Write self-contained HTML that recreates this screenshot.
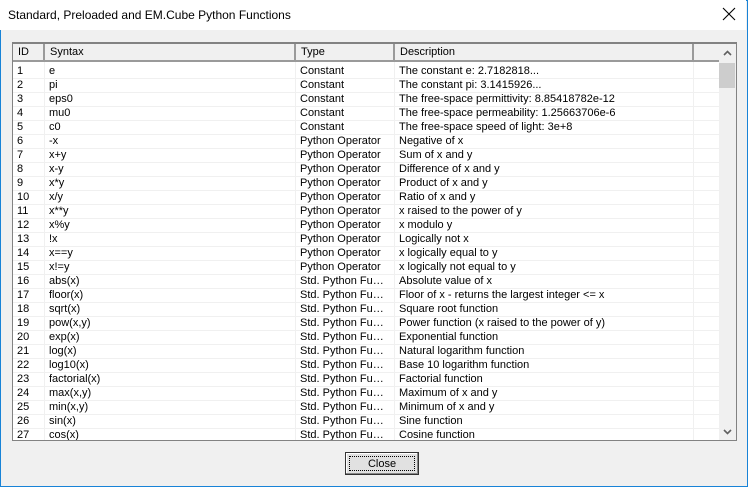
<!DOCTYPE html>
<html><head><style>
*{margin:0;padding:0;box-sizing:border-box}
body{width:748px;height:487px;background:#f0f0f0;font-family:"Liberation Sans",Tahoma,sans-serif;font-size:11px;color:#000;position:relative;overflow:hidden}
.win{position:absolute;left:0;top:0;width:748px;height:487px;border:1px solid #1883d7}
.title{position:absolute;left:0;top:0;width:746px;height:30px;background:#fff;font-size:12px;line-height:31px;padding-left:8px}
.x{position:absolute;right:10px;top:7px;width:14px;height:14px}
.list{position:absolute;left:12px;top:42px;width:725px;height:399px;border:1px solid #828282;border-top:2px solid #828282;background:#fff;overflow:hidden}
.hdr{position:absolute;left:0;top:0;height:18px;width:706px;background:#f0f0f0;border-bottom:2px solid #9a9a9a}
.hdr div{position:absolute;top:0;height:16px;line-height:17px;padding-left:5px;border-right:2px solid #9a9a9a}
.rows{position:absolute;left:0;top:21px;width:706px}
.r{position:relative;height:14px;border-bottom:1px solid #f0f0f0;line-height:13px;white-space:nowrap}
.r span{position:absolute;top:0;padding-left:4px}
.vl{position:absolute;top:18px;bottom:0;width:1px;background:#f0f0f0}
.sb{position:absolute;left:706px;top:0;width:17px;height:397px;background:#f0f0f0}
.thumb{position:absolute;left:0;top:19px;width:16px;height:25px;background:#cdcdcd}
.btn{position:absolute;left:345px;top:452px;width:74px;height:23px;border:1px solid #333;background:#e1e1e1;box-shadow:inset -1px -1px #888,inset 1px 1px #fff;text-align:center;line-height:19px}
.btn i{position:absolute;left:3px;top:3px;right:3px;bottom:3px;border:1px dotted #000;font-style:normal;line-height:14px}
</style></head><body>
<div class="win"></div>
<div class="title">Standard, Preloaded and EM.Cube Python Functions
<svg class="x" viewBox="0 0 14 14"><path d="M1 1L13 13M13 1L1 13" stroke="#000" stroke-width="1.1"/></svg></div>
<div class="list">
<div class="hdr">
<div style="left:0;width:32px">ID</div>
<div style="left:32px;width:251px">Syntax</div>
<div style="left:283px;width:99px">Type</div>
<div style="left:382px;width:299px">Description</div>
</div>
<div class="vl" style="left:31px"></div><div class="vl" style="left:282px"></div><div class="vl" style="left:381px"></div><div class="vl" style="left:680px"></div>
<div class="rows" id="rows"></div>
<div class="sb"><div class="thumb"></div>
<svg style="position:absolute;left:4px;top:6px" width="9" height="6" viewBox="0 0 9 6"><path d="M1 5L4.5 1.5L8 5" stroke="#606060" stroke-width="1.6" fill="none"/></svg>
<svg style="position:absolute;left:4px;top:385px" width="9" height="6" viewBox="0 0 9 6"><path d="M1 1L4.5 4.5L8 1" stroke="#606060" stroke-width="1.6" fill="none"/></svg>
</div>
</div>
<div class="btn"><i>Close</i></div>
<script>
var d=[["e","Constant","The constant e: 2.7182818..."],["pi","Constant","The constant pi: 3.1415926..."],["eps0","Constant","The free-space permittivity: 8.85418782e-12"],["mu0","Constant","The free-space permeability: 1.25663706e-6"],["c0","Constant","The free-space speed of light: 3e+8"],["-x","Python Operator","Negative of x"],["x+y","Python Operator","Sum of x and y"],["x-y","Python Operator","Difference of x and y"],["x*y","Python Operator","Product of x and y"],["x/y","Python Operator","Ratio of x and y"],["x**y","Python Operator","x raised to the power of y"],["x%y","Python Operator","x modulo y"],["!x","Python Operator","Logically not x"],["x==y","Python Operator","x logically equal to y"],["x!=y","Python Operator","x logically not equal to y"],["abs(x)","S","Absolute value of x"],["floor(x)","S","Floor of x - returns the largest integer <= x"],["sqrt(x)","S","Square root function"],["pow(x,y)","S","Power function (x raised to the power of y)"],["exp(x)","S","Exponential function"],["log(x)","S","Natural logarithm function"],["log10(x)","S","Base 10 logarithm function"],["factorial(x)","S","Factorial function"],["max(x,y)","S","Maximum of x and y"],["min(x,y)","S","Minimum of x and y"],["sin(x)","S","Sine function"],["cos(x)","S","Cosine function"]];
var h="";d.forEach(function(r,i){var t=r[1]=="S"?"Std. Python Fu…":r[1];var e=function(s){return s.replace(/&/g,"&amp;").replace(/</g,"&lt;")};
h+='<div class="r"><span style="left:0">'+(i+1)+'</span><span style="left:32px">'+e(r[0])+'</span><span style="left:283px">'+t+'</span><span style="left:382px">'+e(r[2])+'</span></div>';});
document.getElementById("rows").innerHTML=h;
</script>
</body></html>
